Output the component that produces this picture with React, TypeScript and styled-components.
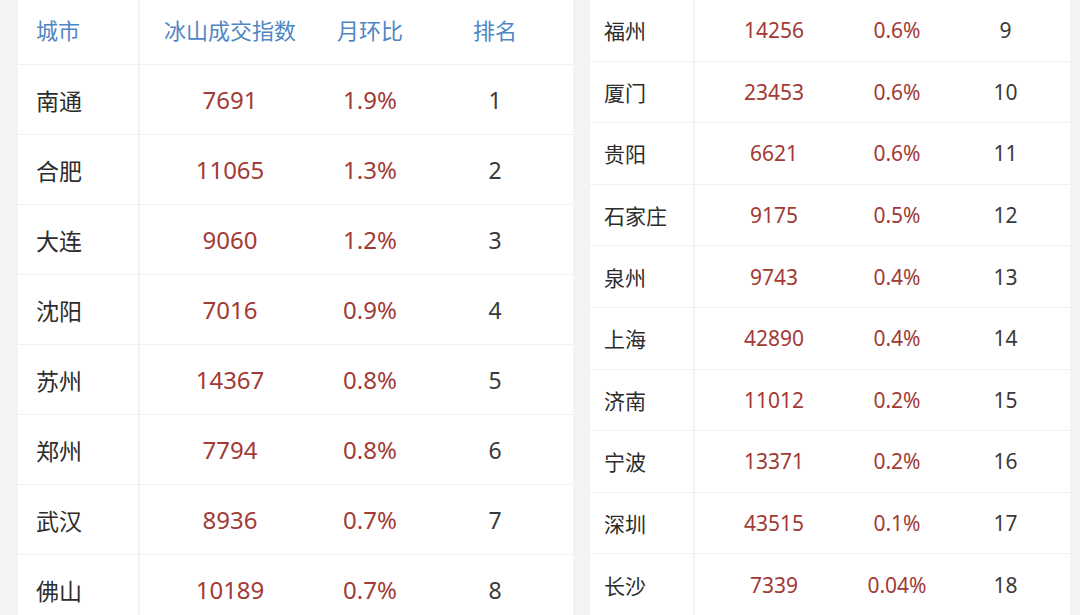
import styled, { createGlobalStyle } from "styled-components";

const GlobalStyle = createGlobalStyle`
  html, body {
    margin: 0;
    padding: 0;
    background: #f3f3f3;
  }
  body {
    font-family: "Noto Sans", "Noto Sans CJK SC", sans-serif;
    overflow: hidden;
  }
`;

const Page = styled.div`
  display: flex;
  align-items: flex-start;
  gap: 17px;
  padding-left: 18px;
  width: 1080px;
  height: 615px;
  box-sizing: border-box;
  overflow: hidden;
`;

const Card = styled.div<{ width: number }>`
  width: ${(p) => p.width}px;
  background: #fff;
  flex-shrink: 0;
`;

const Row = styled.div<{ cols: string; height: number }>`
  display: grid;
  grid-template-columns: ${(p) => p.cols};
  height: ${(p) => p.height}px;
  box-sizing: border-box;
  border-bottom: 1px solid #f1f1f1;
  align-items: stretch;
`;

const Cell = styled.div<{
  size: number;
  tone: "city" | "value" | "rank" | "head";
  first?: boolean;
  pad?: number;
}>`
  display: flex;
  align-items: center;
  justify-content: ${(p) => (p.first ? "flex-start" : "center")};
  padding-left: ${(p) => (p.first ? p.pad ?? 0 : 0)}px;
  padding-bottom: ${(p) => (p.tone === "head" ? 6 : 0)}px;
  border-right: ${(p) => (p.first ? "2px solid #f2f2f2" : "none")};
  font-size: ${(p) => p.size}px;
  color: ${(p) =>
    p.tone === "head"
      ? "#4f86c6"
      : p.tone === "value"
      ? "#a23a35"
      : p.tone === "rank"
      ? "#3a3a3a"
      : "#2c2c2c"};
  white-space: nowrap;
`;

const left = [
  ["南通", "7691", "1.9%", "1"],
  ["合肥", "11065", "1.3%", "2"],
  ["大连", "9060", "1.2%", "3"],
  ["沈阳", "7016", "0.9%", "4"],
  ["苏州", "14367", "0.8%", "5"],
  ["郑州", "7794", "0.8%", "6"],
  ["武汉", "8936", "0.7%", "7"],
  ["佛山", "10189", "0.7%", "8"],
];

const right = [
  ["福州", "14256", "0.6%", "9"],
  ["厦门", "23453", "0.6%", "10"],
  ["贵阳", "6621", "0.6%", "11"],
  ["石家庄", "9175", "0.5%", "12"],
  ["泉州", "9743", "0.4%", "13"],
  ["上海", "42890", "0.4%", "14"],
  ["济南", "11012", "0.2%", "15"],
  ["宁波", "13371", "0.2%", "16"],
  ["深圳", "43515", "0.1%", "17"],
  ["长沙", "7339", "0.04%", "18"],
];

const leftCols = "122px 180px 100px 150px";
const rightCols = "105px 158px 88px 129px";

export default function App() {
  return (
    <>
      <GlobalStyle />
      <Page>
        <Card width={555}>
          <Row cols={leftCols} height={65}>
            <Cell size={22} tone="head" first pad={18}>城市</Cell>
            <Cell size={22} tone="head">冰山成交指数</Cell>
            <Cell size={22} tone="head">月环比</Cell>
            <Cell size={22} tone="head">排名</Cell>
          </Row>
          {left.map(([city, idx, mom, rank]) => (
            <Row key={city} cols={leftCols} height={70}>
              <Cell size={23} tone="city" first pad={18}>{city}</Cell>
              <Cell size={24} tone="value">{idx}</Cell>
              <Cell size={24} tone="value">{mom}</Cell>
              <Cell size={23} tone="rank">{rank}</Cell>
            </Row>
          ))}
        </Card>
        <Card width={480}>
          {right.map(([city, idx, mom, rank]) => (
            <Row key={city} cols={rightCols} height={61.6}>
              <Cell size={21} tone="city" first pad={14}>{city}</Cell>
              <Cell size={21} tone="value">{idx}</Cell>
              <Cell size={21} tone="value">{mom}</Cell>
              <Cell size={21} tone="rank">{rank}</Cell>
            </Row>
          ))}
        </Card>
      </Page>
    </>
  );
}
